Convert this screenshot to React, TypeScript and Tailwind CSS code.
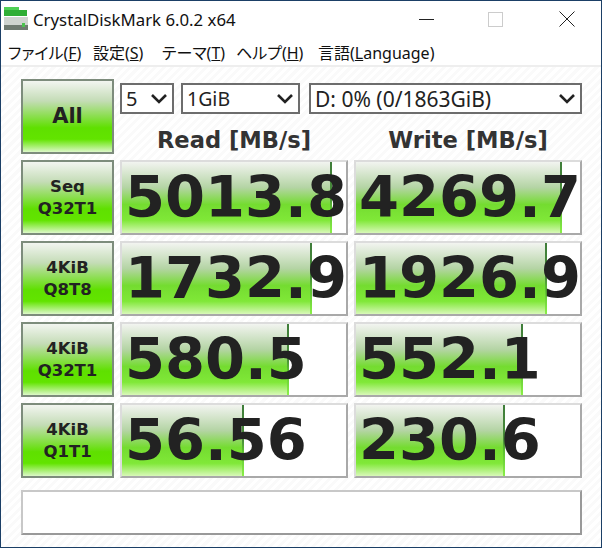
const sans = "font-['Noto_Sans','Noto_Sans_CJK_JP',sans-serif]";
const bold = "font-['DejaVu_Sans',sans-serif] font-bold";

const menus = [
	{ a: "ファイル(", k: "F", b: ")", w: "w-[85px]" },
	{ a: "設定(", k: "S", b: ")", w: "w-[69px]" },
	{ a: "テーマ(", k: "T", b: ")", w: "w-[74px]" },
	{ a: "ヘルプ(", k: "H", b: ")", w: "w-[82px]" },
	{ a: "言語(", k: "L", b: "anguage)", w: "w-[125px]" },
];

const rows = [
	{ label: ["Seq", "Q32T1"], read: "5013.8", readW: 210, write: "4269.7", writeW: 206 },
	{ label: ["4KiB", "Q8T8"], read: "1732.9", readW: 190, write: "1926.9", writeW: 191 },
	{ label: ["4KiB", "Q32T1"], read: "580.5", readW: 167, write: "552.1", writeW: 167 },
	{ label: ["4KiB", "Q1T1"], read: "56.56", readW: 122, write: "230.6", writeW: 149 },
];

const Logo = () => (
	<svg width="26" height="26" viewBox="0 0 26 26" className="shrink-0">
		<rect x="1" y="4" width="23" height="6" fill="#2fae35" />
		<rect x="1" y="1" width="15" height="3" fill="#4fd054" />
		<rect x="1" y="11" width="24" height="8" fill="#cfd4cf" />
		<rect x="1" y="19" width="24" height="5" fill="#6f7a70" />
		<rect x="19" y="17" width="3" height="4" fill="#4cc24f" />
	</svg>
);

const Chevron = () => (
	<svg width="18" height="12" viewBox="0 0 18 12" className="shrink-0">
		<path d="M2 2 L9 9 L16 2" fill="none" stroke="#222" strokeWidth="2.6" />
	</svg>
);

const Combo = ({ text, className }: { text: string; className: string }) => (
	<div className={`flex h-[31px] items-center justify-between border-[2px] border-[#6d6d6d] bg-white pr-[4px] pl-[4px] text-[#222] ${sans} ${className}`}>
		<span className="pt-[1px] leading-none">{text}</span>
		<Chevron />
	</div>
);

const GreenButton = ({ lines, big }: { lines: string[]; big?: boolean }) => (
	<div
		className={`flex h-[75px] w-[93px] shrink-0 flex-col items-center justify-center border-[2px] border-[#7d8c7c] bg-[linear-gradient(#f2f5f0_0%,#c4dcb6_28%,#5fe000_66%,#62e400_82%,#dcf8c8_100%)] text-[#222] ${bold} ${big ? "text-[21px]" : "text-[16.5px] leading-[22px]"}`}
	>
		{lines.map((l) => (
			<span key={l}>{l}</span>
		))}
	</div>
);

const Meter = ({ value, width }: { value: string; width: number }) => (
	<div className="relative flex h-[75px] w-[228px] items-center overflow-hidden border-[2px] border-t-[#dcdcdc] border-r-[#a9a9a9] border-b-[#a9a9a9] border-l-[#dcdcdc] bg-white">
		<div
			className="absolute top-0 bottom-0 left-0 bg-[linear-gradient(#f2f4f0_0%,#b4d4a4_36%,#74dc30_60%,#80e838_82%,#d8f8b8_100%)]"
			style={{ width }}
		>
			<div className="absolute top-0 right-0 bottom-0 w-[2px] bg-[linear-gradient(#3f7d3a_0%,#4a8f3a_50%,#5cc030_65%,#8af048_100%)]" />
		</div>
		<span className={`relative pl-[3px] text-[57.5px] leading-none whitespace-nowrap text-[#222] ${bold}`}>{value}</span>
	</div>
);

export default function App() {
	return (
		<div className="flex h-[548px] w-[602px] flex-col overflow-hidden border border-[#1b3f66] bg-white">
			<div className={`flex h-[36px] items-center pl-[2px] text-[16.8px] text-[#111] ${sans}`}>
				<Logo />
				<span className="mt-[2px] ml-[4px]">CrystalDiskMark 6.0.2 x64</span>
				<div className="ml-auto flex items-center pr-[26px]">
					<div className="h-px w-[15px] bg-[#222]" />
					<div className="ml-[54px] h-[15px] w-[15px] border border-[#ccc]" />
					<svg width="16" height="16" viewBox="0 0 16 16" className="ml-[56px]">
						<path d="M0.5 0.5 L15.5 15.5 M15.5 0.5 L0.5 15.5" stroke="#222" strokeWidth="1" />
					</svg>
				</div>
			</div>
			<div className={`flex h-[28px] items-center pt-[4px] pl-[7px] text-[16px] text-[#111] [font-feature-settings:'palt'] ${sans}`}>
				{menus.map((m) => (
					<span key={m.k} className={`whitespace-nowrap ${m.w}`}>
						{m.a}
						<span className="underline">{m.k}</span>
						{m.b}
					</span>
				))}
			</div>
			<div className="flex flex-1 flex-col border-t-[2px] border-t-[#eeeeee] bg-[repeating-linear-gradient(135deg,#fafafa_0px,#fafafa_3px,#ffffff_3px,#ffffff_6px)] pt-[12px] pl-[20px]">
				<div className="flex h-[81px] gap-[6px]">
					<GreenButton lines={["All"]} big />
					<div className="flex flex-col">
						<div className="mt-[4px] flex">
							<Combo text="5" className="w-[54px] text-[20px]" />
							<Combo text="1GiB" className="ml-[7px] w-[119px] text-[19.5px]" />
							<Combo text="D: 0% (0/1863GiB)" className="ml-[9px] w-[273px] text-[21px]" />
						</div>
						<div className={`flex flex-1 pt-[7px] text-[22.6px] text-[#333] ${bold}`}>
							<div className="flex w-[228px] items-center justify-center">Read [MB/s]</div>
							<div className="ml-[6px] flex w-[228px] items-center justify-center">Write [MB/s]</div>
						</div>
					</div>
				</div>
				<div className="flex flex-col gap-[6px]">
					{rows.map((r) => (
						<div key={r.label.join()} className="flex gap-[6px]">
							<GreenButton lines={r.label} />
							<Meter value={r.read} width={r.readW} />
							<Meter value={r.write} width={r.writeW} />
						</div>
					))}
				</div>
				<div className="mt-[12px] h-[45px] w-[561px] border-[2px] border-t-[#c8c8c8] border-r-[#999] border-b-[#999] border-l-[#c8c8c8] bg-white" />
			</div>
		</div>
	);
}
